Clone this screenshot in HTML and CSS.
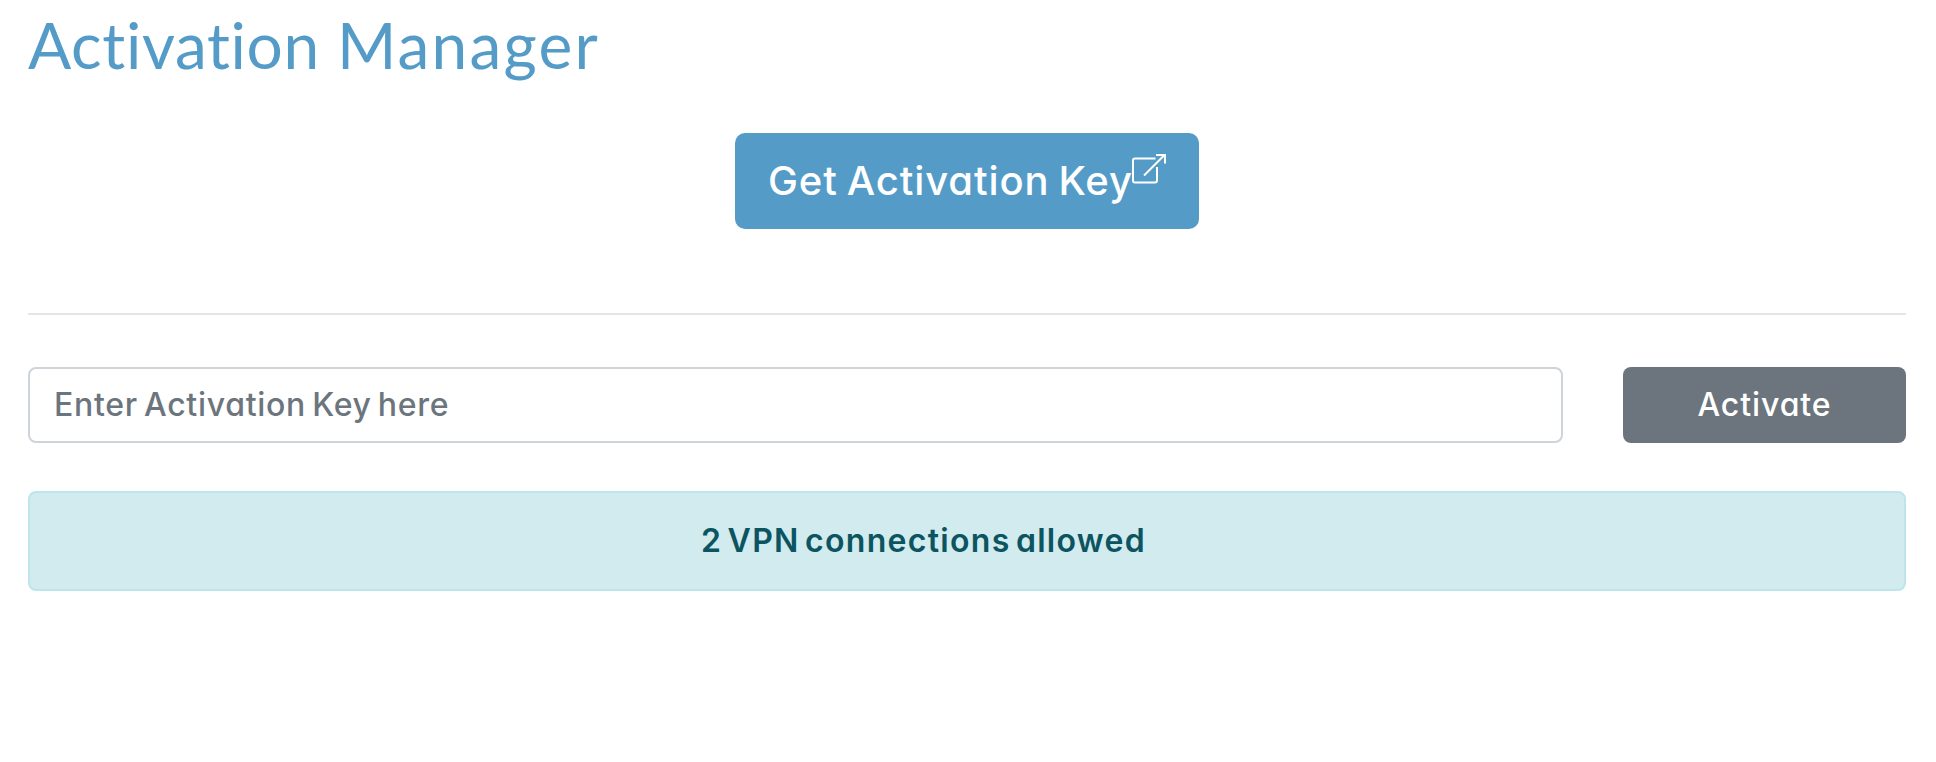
FILE: index.html
```html
<!DOCTYPE html>
<html lang="en">
<head>
<meta charset="utf-8">
<title>Activation Manager</title>
<link rel="stylesheet" href="styles.css">
</head>
<body>
<main class="page">
  <h1 class="title">Activation <span class="title-wide">Manager</span></h1>
  <div class="key-link">
    <a class="btn btn-primary"><span>Get Activation Key</span><svg class="external" width="36" height="32" viewBox="0 0 36 32" fill="none" stroke="#fff" stroke-width="2"><path d="M24.500 5.500H4Q2 5.500 2 7.500V27.500Q2 29.500 4 29.500H24Q26 29.500 26 27.500V14M13 22.500L33.500 2M25 2H34V10.500"/></svg></a>
  </div>
  <hr class="divider">
  <form class="activation">
    <input class="key-input" type="text" placeholder="Enter Activation Key here">
    <button class="btn btn-secondary" type="button"><span>Activate</span></button>
  </form>
  <div class="alert"><strong>2 VPN connections allowed</strong></div>
</main>
</body>
</html>
```
FILE: styles.css
```css
* { box-sizing: border-box; }
body { margin: 0; background: #fff; font-family: Inter, sans-serif; }
.page { display: flex; flex-direction: column; padding: 0 30px 0 28px; font-feature-settings: "cv11"; }
.title { margin: 0; height: 133px; padding-top: 6px; font: 400 64px/77px Lato, sans-serif; color: #549cc7; letter-spacing: 0.65px; white-space: nowrap; }
.title-wide { letter-spacing: 2.2px; }
.key-link { display: flex; justify-content: center; margin-bottom: 84px; }
.btn { display: flex; justify-content: center; color: #fff; white-space: nowrap; }
.btn-primary { width: 464px; height: 96px; border-radius: 10px; background: #549cc7; font-size: 40px; font-weight: 500; line-height: 96px; justify-content: flex-start; padding-left: 33px; letter-spacing: 0.9px; word-spacing: -2.5px; }
.btn-primary span { width: 363px; }
.external { margin-top: 20px; flex: none; overflow: visible; }
.divider { width: 100%; height: 2px; margin: 0 0 52px; border: 0; background: #e5e5e5; }
.activation { display: flex; gap: 60px; margin: 0 0 48px; }
.key-input { flex: 1; height: 76px; padding: 0 24px 2px; border: 2px solid #ced4da; border-radius: 8px; background: #fff; font: 500 32px Inter, sans-serif; font-feature-settings: "cv11"; letter-spacing: 0.7px; word-spacing: -3px; color: #495057; }
.key-input::placeholder { color: #6c757d; opacity: 1; }
.btn-secondary { width: 283px; height: 76px; border: 0; border-radius: 8px; padding: 0; background: #6c757d; font: 500 32px/76px Inter, sans-serif; font-feature-settings: "cv11"; letter-spacing: 0.9px; }
.alert { height: 100px; padding-left: 671px; border: 2px solid #bee5eb; border-radius: 8px; background: #d1ebef; color: #0c5460; font-size: 32px; line-height: 96px; letter-spacing: 1.3px; word-spacing: -4px; }
.alert strong { font-weight: 600; }
```
